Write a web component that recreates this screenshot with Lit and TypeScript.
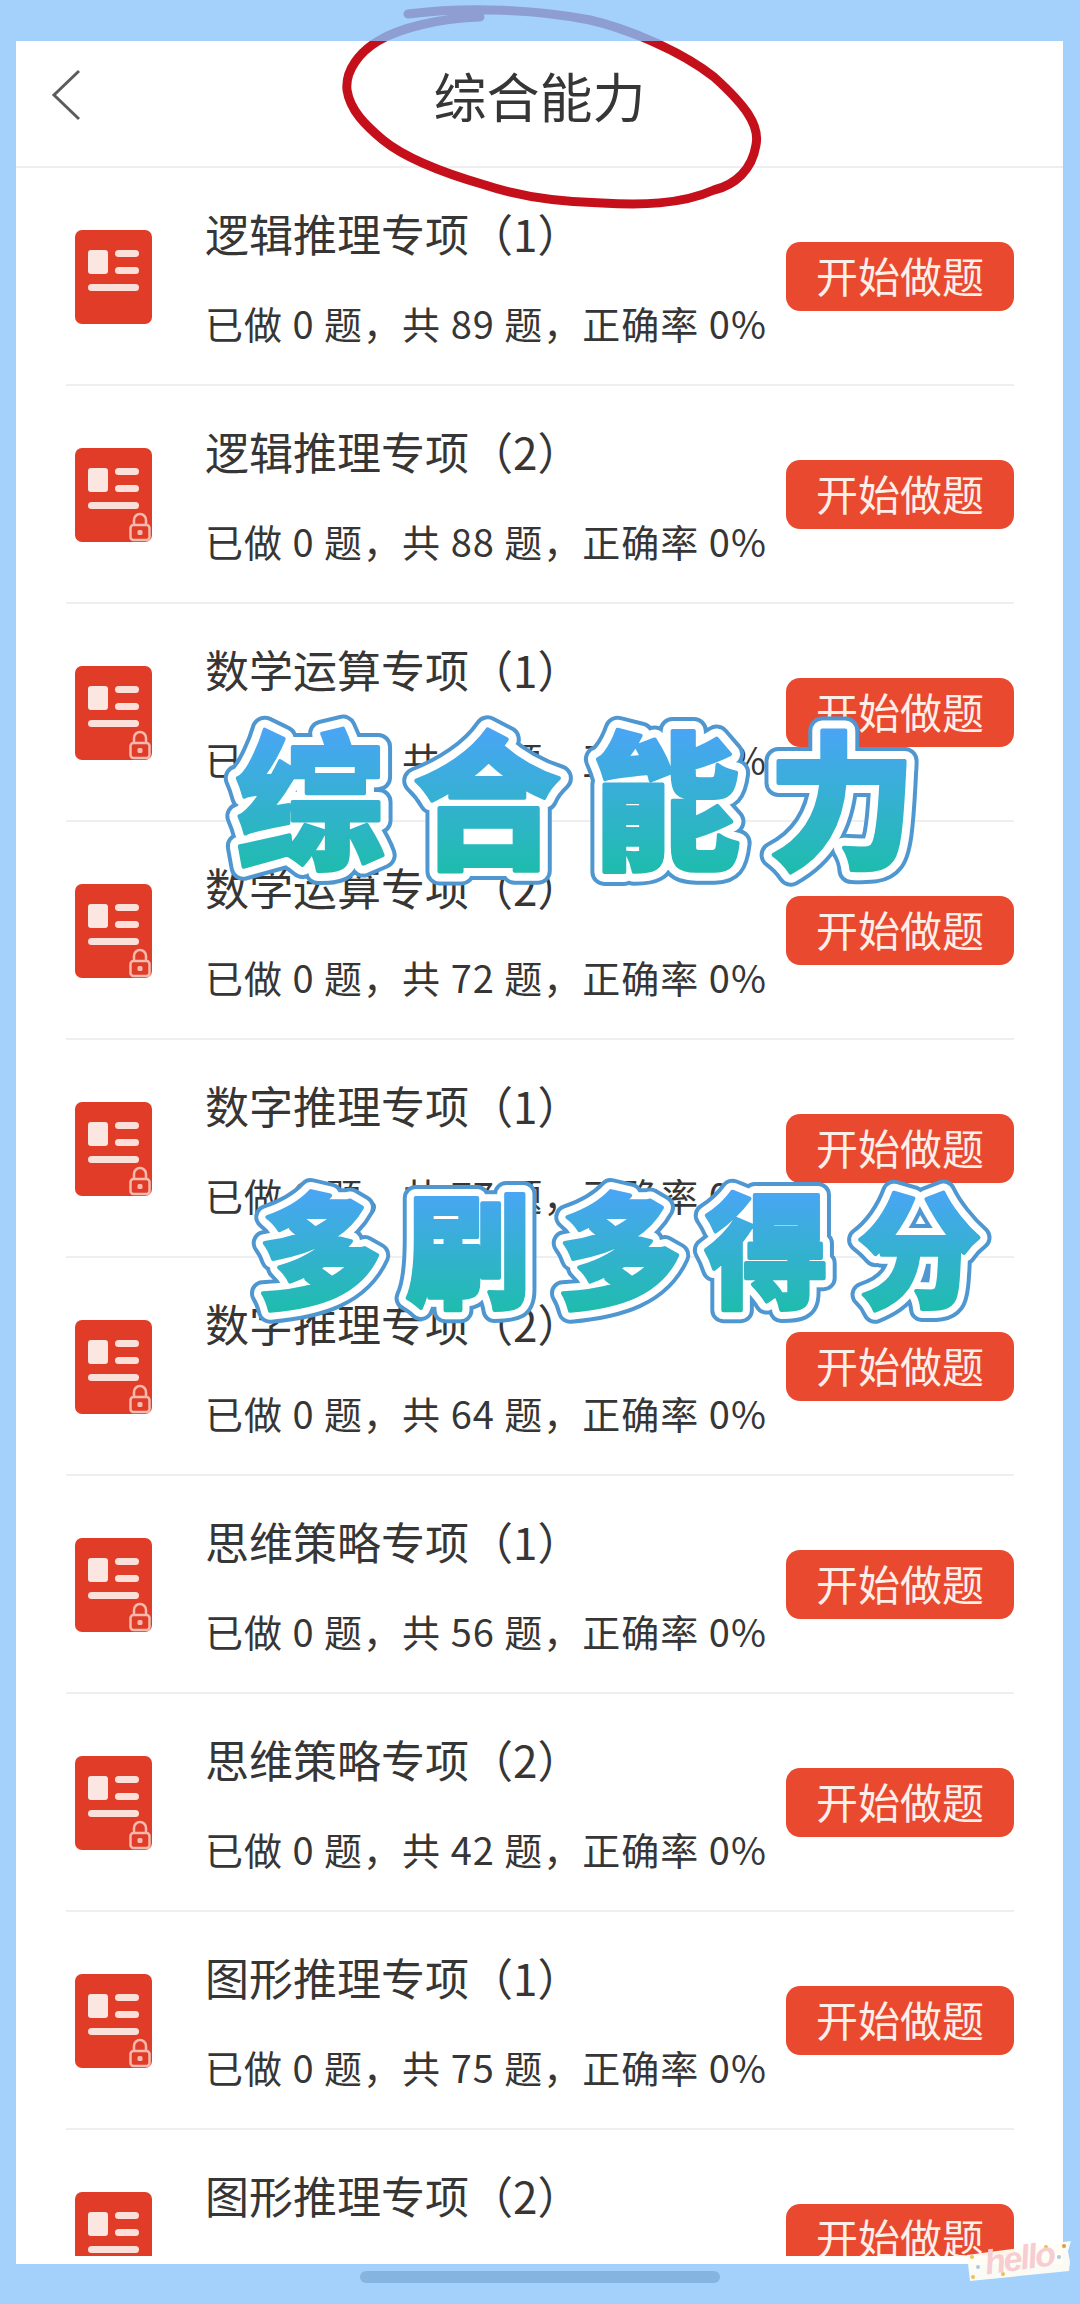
import { LitElement, html, css, svg } from 'lit';
import { customElement } from 'lit/decorators.js';

//
// the list is plain data, one entry per row
// locked rows get the little padlock on the icon
// the last row is cut off by the panel before its second line starts, so no total
//
const rows = [
  { name: '逻辑推理专项（1）', total: 89, locked: false },
  { name: '逻辑推理专项（2）', total: 88, locked: true },
  { name: '数学运算专项（1）', total: 80, locked: true },
  { name: '数学运算专项（2）', total: 72, locked: true },
  { name: '数字推理专项（1）', total: 77, locked: true },
  { name: '数字推理专项（2）', total: 64, locked: true },
  { name: '思维策略专项（1）', total: 56, locked: true },
  { name: '思维策略专项（2）', total: 42, locked: true },
  { name: '图形推理专项（1）', total: 75, locked: true },
  { name: '图形推理专项（2）', total: 0, locked: true },
];

// the hand drawn ring round the page title
const circle = 'M408 14 C470 6 540 10 590 20 C625 28 680 50 714 77 C745 105 760 125 756 145 C752 170 735 185 714 190 C680 205 640 205 602 203 C555 202 515 195 485 185 C440 172 405 158 383 140 C365 125 350 110 347 90 C345 70 360 52 378 41 C400 28 440 18 480 17';

const titleX = '236 413 592 768';
const bannerX = '258 406 558 705 857';

// confetti on the sticker in the corner
const dots = [
  [972, 2257, '#e8c25a'], [978, 2267, '#a9cbe0'], [973, 2277, '#e8c25a'], [1003, 2274, '#e8c25a'],
  [1046, 2247, '#e8c25a'], [1064, 2246, '#d99a4a'], [1059, 2257, '#a9cbe0'],
] as const;

const paper = svg`
  <rect x="0" y="0" width="77" height="94" rx="7" fill="#e03c28"/>
  <rect x="13" y="20" width="20" height="24" rx="3" fill="#fbe6e2"/>
  <rect x="40" y="20" width="24" height="7" rx="3.5" fill="#fbe0da"/>
  <rect x="40" y="37" width="24" height="7" rx="3.5" fill="#fbe0da"/>
  <rect x="13" y="54" width="51" height="7" rx="3.5" fill="#fbe0da"/>
`;

const padlock = svg`
  <path d="M59 77 v-5 a6 6 0 0 1 12 0 v5" fill="none" stroke="#f5b9ad" stroke-width="2.5"/>
  <rect x="55.5" y="77" width="19" height="15" rx="3" fill="#e03c28" stroke="#f5b9ad" stroke-width="2.5"/>
  <rect x="62.5" y="82" width="5" height="5" rx="1.5" fill="#f5b9ad"/>
`;

@customElement('app-root')
export class AppRoot extends LitElement {
  static styles = css`
    :host {
      display: block;
      position: relative;
      width: 1080px;
      height: 2304px;
      overflow: hidden;
      background: #a3d1fb;
      font-family: "Noto Sans CJK SC", "Liberation Sans", sans-serif;
      color: #363636;
    }
    .panel {
      display: flex;
      flex-direction: column;
      height: 2223px;
      margin: 0 17px 0 16px;
      background: #fff;
      position: relative;
      top: 41px;
    }
    .bar {
      flex: none;
      display: flex;
      align-items: center;
      justify-content: center;
      height: 127px;
      border-bottom: 2px solid #eeeeee;
      box-sizing: border-box;
      position: relative;
    }
    .bar h1 {
      margin: -16px 0 0;
      font-size: 53px;
      font-weight: 400;
      line-height: 1;
    }
    .back {
      position: absolute;
      left: 34px;
      top: 27px;
    }
    .list {
      height: 2088px;
      margin: 0 49px 0 50px;
      overflow: hidden;
    }
    .row {
      display: flex;
      align-items: center;
      height: 218px;
      box-sizing: border-box;
      border-bottom: 2px solid #efefef;
    }
    .icon {
      flex: none;
      margin-left: 9px;
      width: 77px;
      height: 94px;
      margin-top: 2px;
    }
    .text {
      flex: 1;
      min-width: 0;
      margin-top: 4px;
      margin-left: 53px;
      display: flex;
      flex-direction: column;
      gap: 42px;
      white-space: nowrap;
    }
    .name {
      font-size: 44px;
      line-height: 48px;
    }
    .sub {
      font-size: 38px;
      letter-spacing: 1px;
      line-height: 48px;
    }
    .start {
      flex: none;
      width: 228px;
      height: 69px;
      border-radius: 14px;
      background: #e8492f;
      color: #fdeee8;
      font-size: 42px;
      line-height: 66px;
      text-align: center;
      margin-top: 1px;
    }
    .home {
      position: absolute;
      left: 360px;
      top: 2271px;
      width: 360px;
      height: 12px;
      border-radius: 6px;
      background: #85b4e0;
    }
    svg.over {
      position: absolute;
      left: 0;
      top: 0;
      pointer-events: none;
    }
    .big {
      font-family: "Noto Sans CJK SC", sans-serif;
      font-weight: 900;
    }
    .hello {
      font-family: "Liberation Sans", sans-serif;
      font-size: 34px;
      font-weight: 700;
      font-style: italic;
      letter-spacing: -2px;
    }
  `;

  renderRow(r: { name: string; total: number; locked: boolean }) {
    return html`
      <div class="row">
        <svg class="icon" viewBox="0 0 77 94">${paper}${r.locked ? padlock : ''}</svg>
        <div class="text">
          <div class="name">${r.name}</div>
          ${r.total ? html`<div class="sub">已做 0 题，共 ${r.total} 题，正确率 0%</div>` : html`<div class="sub">&nbsp;</div>`}
        </div>
        <div class="start">开始做题</div>
      </div>
    `;
  }

  render() {
    return html`
      <div class="panel">
        <div class="bar">
          <svg class="back" width="32" height="54" viewBox="0 0 32 54">
            <path d="M29 3 L4 27 L29 51" fill="none" stroke="#5c5c5c" stroke-width="3"/>
          </svg>
          <h1>综合能力</h1>
        </div>
        <div class="list">${rows.map((r) => this.renderRow(r))}</div>
      </div>
      <div class="home"></div>

      <svg class="over" width="1080" height="2304" viewBox="0 0 1080 2304">
        <defs>
          <linearGradient id="g1" gradientUnits="userSpaceOnUse" x1="0" y1="730" x2="0" y2="870">
            <stop offset="0" stop-color="#4aa5f5"/>
            <stop offset="1" stop-color="#1fbcae"/>
          </linearGradient>
          <linearGradient id="g2" gradientUnits="userSpaceOnUse" x1="0" y1="1190" x2="0" y2="1310">
            <stop offset="0" stop-color="#4aa5f5"/>
            <stop offset="1" stop-color="#1fbcae"/>
          </linearGradient>
          <clipPath id="inside"><rect x="16" y="41" width="1047" height="2223"/></clipPath>
          <clipPath id="outside"><rect x="0" y="0" width="1080" height="41"/></clipPath>
          <path id="loop" d=${circle} fill="none" stroke-width="9" stroke-linecap="round"/>
          <text id="t1" class="big" x=${titleX} y="857" font-size="148">综合能力</text>
          <text id="t2" class="big" x=${bannerX} y="1298" font-size="124">多刷多得分</text>
        </defs>

        <use href="#loop" stroke="#c5101c" clip-path="url(#inside)"/>
        <use href="#loop" stroke="#8f9ed2" clip-path="url(#outside)"/>

        <use href="#t1" fill="#4f97d0" stroke="#4f97d0" stroke-width="28" stroke-linejoin="round"/>
        <use href="#t1" fill="#fff" stroke="#fff" stroke-width="20" stroke-linejoin="round"/>
        <use href="#t1" fill="url(#g1)" stroke="url(#g1)" stroke-width="4" stroke-linejoin="round"/>

        <use href="#t2" fill="#4f97d0" stroke="#4f97d0" stroke-width="26" stroke-linejoin="round"/>
        <use href="#t2" fill="#fff" stroke="#fff" stroke-width="18" stroke-linejoin="round"/>
        <use href="#t2" fill="url(#g2)" stroke="url(#g2)" stroke-width="4" stroke-linejoin="round"/>

        <polygon points="967,2255 1071,2241 1068,2251 1070,2262 1069,2271 970,2281" fill="#fffdf3" opacity="0.95"/>
        ${dots.map(([x, y, c]) => svg`<circle cx=${x} cy=${y} r="2" fill=${c}/>`)}
        <text class="hello" x="985" y="2270" fill="#f6cdd3" transform="rotate(-8 1018 2262)">hello</text>
      </svg>
    `;
  }
}
